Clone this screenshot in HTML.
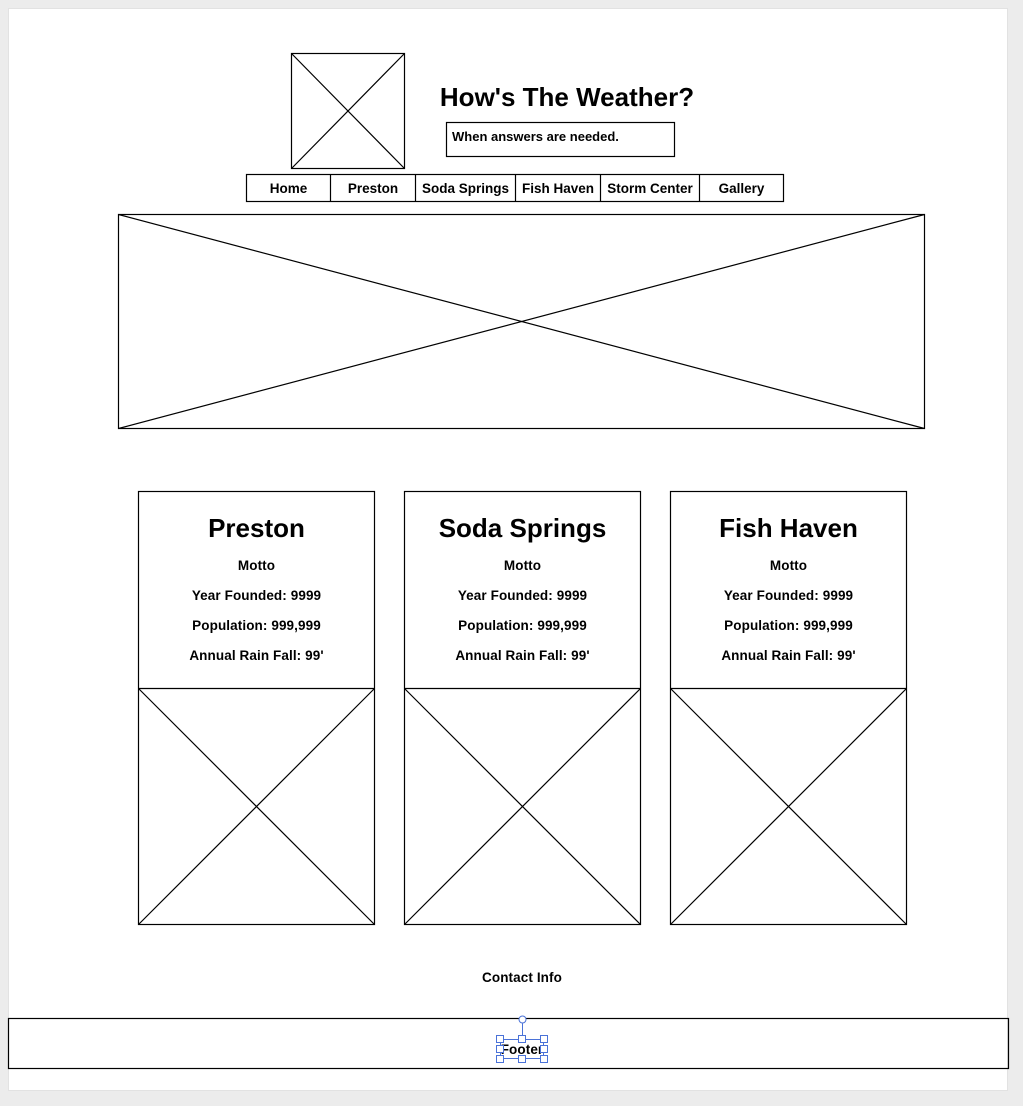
<!DOCTYPE html>
<html><head><meta charset="utf-8"><style>
html,body{margin:0;padding:0;background:#ececec;width:1023px;height:1106px;overflow:hidden}
svg{display:block}
text{font-family:"Liberation Sans",Arial,sans-serif;font-weight:bold;fill:#000}
</style></head><body>
<svg width="1023" height="1106" viewBox="0 0 1023 1106" xmlns="http://www.w3.org/2000/svg">
<rect x="0" y="0" width="1023" height="1106" fill="#ececec"/>
<rect x="8.5" y="8.5" width="999" height="1082" fill="#fff" stroke="#e2e2e2"/>
<g fill="none" stroke="#000" stroke-width="1.2">
<rect x="291.5" y="53.5" width="113" height="115"/>
<path d="M291.5 53.5L404.5 168.5M404.5 53.5L291.5 168.5"/>
<rect x="446.5" y="122.5" width="228" height="34"/>
<rect x="246.5" y="174.5" width="537" height="27"/>
<path d="M330.5 174.5V201.5M415.5 174.5V201.5M515.5 174.5V201.5M600.5 174.5V201.5M699.5 174.5V201.5"/>
<rect x="118.5" y="214.5" width="806" height="214"/>
<path d="M118.5 214.5L924.5 428.5M924.5 214.5L118.5 428.5"/>
<rect x="138.5" y="491.5" width="236" height="433"/>
<path d="M138.5 688.5H374.5M138.5 688.5L374.5 924.5M374.5 688.5L138.5 924.5"/>
<rect x="404.5" y="491.5" width="236" height="433"/>
<path d="M404.5 688.5H640.5M404.5 688.5L640.5 924.5M640.5 688.5L404.5 924.5"/>
<rect x="670.5" y="491.5" width="236" height="433"/>
<path d="M670.5 688.5H906.5M670.5 688.5L906.5 924.5M906.5 688.5L670.5 924.5"/>
<rect x="8.5" y="1018.5" width="1000" height="50"/>
</g>
<text x="567" y="106" font-size="26" text-anchor="middle">How's The Weather?</text>
<text x="452" y="141" font-size="13">When answers are needed.</text>
<g font-size="13.5" text-anchor="middle">
<text x="288.5" y="193">Home</text>
<text x="373" y="193">Preston</text>
<text x="465.5" y="193">Soda Springs</text>
<text x="558" y="193">Fish Haven</text>
<text x="650" y="193">Storm Center</text>
<text x="741.5" y="193">Gallery</text>
</g>
<g text-anchor="middle">
<text x="256.5" y="537" font-size="26">Preston</text>
<text x="522.5" y="537" font-size="26">Soda Springs</text>
<text x="788.5" y="537" font-size="26">Fish Haven</text>
</g>
<g font-size="13.5" text-anchor="middle" letter-spacing="0.1">
<text x="256.5" y="570">Motto</text><text x="256.5" y="600">Year Founded: 9999</text><text x="256.5" y="630">Population: 999,999</text><text x="256.5" y="660">Annual Rain Fall: 99'</text>
<text x="522.5" y="570">Motto</text><text x="522.5" y="600">Year Founded: 9999</text><text x="522.5" y="630">Population: 999,999</text><text x="522.5" y="660">Annual Rain Fall: 99'</text>
<text x="788.5" y="570">Motto</text><text x="788.5" y="600">Year Founded: 9999</text><text x="788.5" y="630">Population: 999,999</text><text x="788.5" y="660">Annual Rain Fall: 99'</text>
<text x="522" y="982">Contact Info</text>
<text x="522" y="1054">Footer</text>
</g>
<g fill="#fff" stroke="#4a72d8" stroke-width="1">
<rect x="500.5" y="1039.5" width="43" height="19" fill="none"/>
<path d="M522.5 1023.5V1036.5" fill="none"/>
<circle cx="522.5" cy="1019.5" r="3.5"/>
<rect x="496.5" y="1035.5" width="7" height="7"/><rect x="518.5" y="1035.5" width="7" height="7"/><rect x="540.5" y="1035.5" width="7" height="7"/>
<rect x="496.5" y="1045.5" width="7" height="7"/><rect x="540.5" y="1045.5" width="7" height="7"/>
<rect x="496.5" y="1055.5" width="7" height="7"/><rect x="518.5" y="1055.5" width="7" height="7"/><rect x="540.5" y="1055.5" width="7" height="7"/>
</g>
</svg>
</body></html>
